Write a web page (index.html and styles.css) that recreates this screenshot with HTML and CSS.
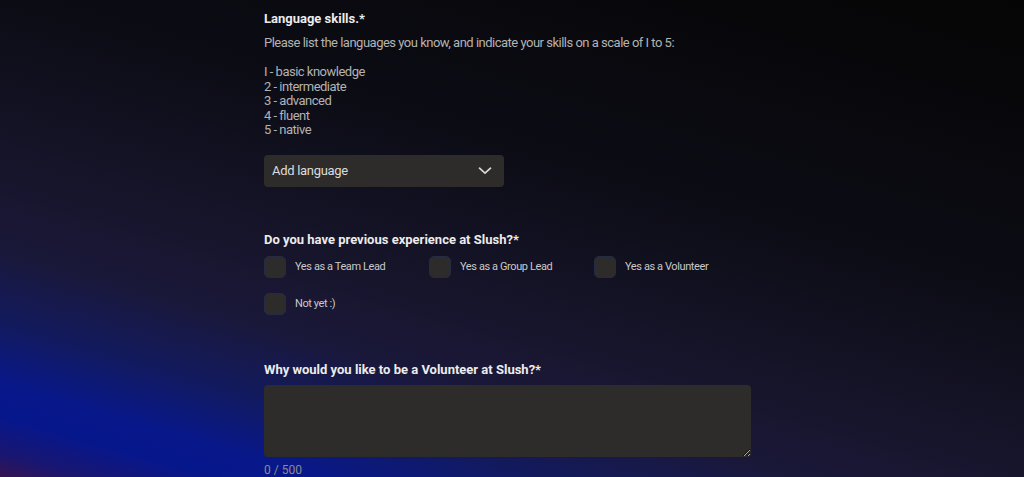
FILE: index.html
```html
<!DOCTYPE html>
<html lang="en">
<head>
    <meta charset="UTF-8">
    <meta name="viewport" content="width=device-width, initial-scale=1.0">
    <title>Volunteer application</title>
    <link rel="stylesheet" href="styles.css">
</head>
<body>
    <div class="form">
        <section class="field">
            <h3 class="field-title">Language skills.*</h3>
            <p class="field-help">Please list the languages you know, and indicate your skills on a scale of I to 5:<br>
                <br>
                I - basic knowledge<br>
                2 - intermediate<br>
                3 - advanced<br>
                4 - fluent<br>
                5 - native</p>
            <button type="button" class="select">
                <span>Add language</span>
                <svg class="chevron" width="14" height="8" viewBox="0 0 14 8" fill="none">
                    <path d="M1.5 1.2l5.5 5L12.5 1.2" stroke="#d8d8d8" stroke-width="1.7" stroke-linecap="round" stroke-linejoin="round"/>
                </svg>
            </button>
        </section>

        <section class="field field-gap">
            <h3 class="field-title">Do you have previous experience at Slush?*</h3>
            <div class="choices">
                <label class="choice"><input type="checkbox"><span class="box"></span>Yes as a Team Lead</label>
                <label class="choice"><input type="checkbox"><span class="box"></span>Yes as a Group Lead</label>
                <label class="choice"><input type="checkbox"><span class="box"></span>Yes as a Volunteer</label>
                <label class="choice"><input type="checkbox"><span class="box"></span>Not yet :)</label>
            </div>
        </section>

        <section class="field field-gap field-gap-wide">
            <h3 class="field-title">Why would you like to be a Volunteer at Slush?*</h3>
            <textarea class="answer" maxlength="500"></textarea>
            <div class="counter">0 / 500</div>
        </section>
    </div>
</body>
</html>
```

FILE: styles.css
```css
html, body {
    height: 100%;
}

body {
    margin: 0;
    overflow: hidden;
    font-family: Roboto, "Liberation Sans", Arial, sans-serif;
    color: #e6e6e6;
    background: linear-gradient(196deg,
        #050505 0%,
        #0c0c15 38%,
        #17152b 60%,
        #1a1838 70%,
        #121a5e 80%,
        #08188a 88%,
        #06178c 92%,
        #1a1670 97%,
        #36144e 100%);
}

.form {
    width: 496px;
    margin: 0 auto;
    padding-top: 11px;
}

.field-gap {
    margin-top: 45px;
}

.field-gap-wide {
    margin-top: 47px;
}

.field-title {
    margin: 0;
    font-size: 13px;
    line-height: 16px;
    font-weight: bold;
    color: #ececec;
}

.field-help {
    margin: 9px 0 0;
    font-size: 13px;
    line-height: 14.5px;
    letter-spacing: -0.5px;
    color: #b3b3b3;
}

.select {
    display: flex;
    align-items: center;
    justify-content: space-between;
    width: 240px;
    height: 32px;
    margin-top: 17px;
    padding: 0 12px 0 8px;
    border: 0;
    border-radius: 4px;
    background-color: #2d2c2a;
    color: #dcdcdc;
    font-family: inherit;
    font-size: 13px;
    letter-spacing: -0.3px;
    cursor: pointer;
}

.choices {
    display: grid;
    grid-template-columns: repeat(3, 165px);
    row-gap: 15px;
    margin-top: 8px;
}

.choice {
    display: flex;
    align-items: center;
    gap: 9px;
    font-size: 11px;
    letter-spacing: -0.4px;
    color: #c9c9c9;
    cursor: pointer;
}

.choice input {
    display: none;
}

.box {
    width: 20px;
    height: 20px;
    border: 1px solid #262b45;
    border-radius: 5px;
    background-color: #2d2c2a;
}

.answer {
    display: block;
    width: 487px;
    height: 72px;
    margin-top: 7px;
    box-sizing: border-box;
    border: 0;
    border-radius: 4px;
    background-color: #2d2c2a;
    color: #e6e6e6;
    font-family: inherit;
    font-size: 13px;
}

.counter {
    margin-top: 7px;
    font-size: 12px;
    line-height: 12px;
    color: #8c8c8c;
}
```
